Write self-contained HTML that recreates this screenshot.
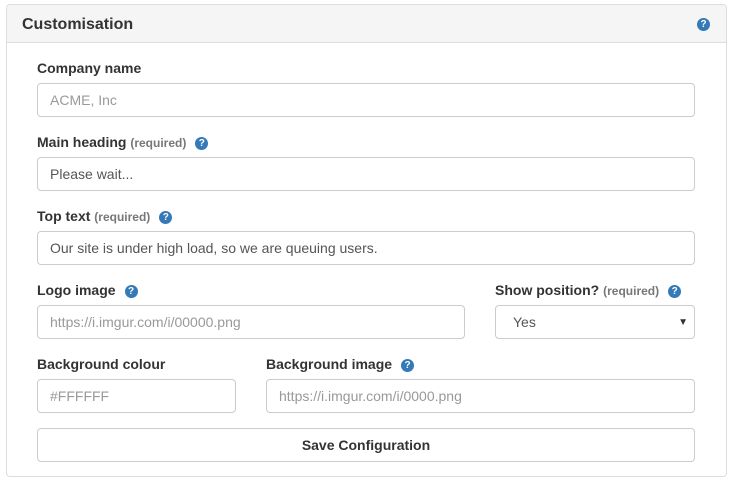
<!DOCTYPE html>
<html><head><style>
*{box-sizing:border-box;margin:0;padding:0}
body{width:735px;height:490px;background:#fff;font-family:"Liberation Sans",sans-serif;position:relative;color:#333}
.panel{position:absolute;left:6px;top:4px;width:721px;height:473px;border:1px solid #ddd;border-radius:4px}
.hd{height:38px;background:#f5f5f5;border-bottom:1px solid #ddd;border-radius:4px 4px 0 0;padding:11px 15px;font-size:16px;font-weight:bold;color:#333}
.lbl{position:absolute;font-size:14px;font-weight:bold;color:#333;line-height:16px}
.lbl small{font-size:12px;color:#777}
.inp{position:absolute;height:34px;border:1px solid #ccc;border-radius:4px;font-size:14px;padding:8px 12px;line-height:16px;color:#555;background:#fff}
.ph{color:#999}
.q{display:inline-block;width:13px;height:13px;border-radius:50%;background:#337ab7;color:#fff;font-size:10px;font-weight:bold;text-align:center;line-height:13px;vertical-align:1px;margin-left:9px}
.btn{position:absolute;left:37px;top:428px;width:658px;height:34px;border:1px solid #ccc;border-radius:4px;text-align:center;font-size:14px;font-weight:bold;line-height:32px;color:#333;background:#fff}
</style></head><body>
<div class="panel"><div class="hd">Customisation</div></div>
<span class="q" style="position:absolute;left:697px;top:18px;margin:0">?</span>
<div class="lbl" style="left:37px;top:60px">Company name</div>
<div class="inp ph" style="left:37px;top:83px;width:658px">ACME, Inc</div>
<div class="lbl" style="left:37px;top:134px">Main heading <small>(required)</small><span class="q">?</span></div>
<div class="inp" style="left:37px;top:157px;width:658px">Please wait...</div>
<div class="lbl" style="left:37px;top:208px">Top text <small>(required)</small><span class="q">?</span></div>
<div class="inp" style="left:37px;top:231px;width:658px">Our site is under high load, so we are queuing users.</div>
<div class="lbl" style="left:37px;top:282px">Logo image<span class="q">?</span></div>
<div class="inp ph" style="left:37px;top:305px;width:428px">https://i.imgur.com/i/00000.png</div>
<div class="lbl" style="left:495px;top:282px">Show position? <small>(required)</small><span class="q">?</span></div>
<div class="inp" style="left:495px;top:305px;width:200px;padding-left:17px">Yes<span style="position:absolute;right:6px;top:9px;font-size:10px;color:#333">▼</span></div>
<div class="lbl" style="left:37px;top:356px">Background colour</div>
<div class="inp ph" style="left:37px;top:379px;width:199px">#FFFFFF</div>
<div class="lbl" style="left:266px;top:356px">Background image<span class="q">?</span></div>
<div class="inp ph" style="left:266px;top:379px;width:429px">https://i.imgur.com/i/0000.png</div>
<div class="btn">Save Configuration</div>
</body></html>
